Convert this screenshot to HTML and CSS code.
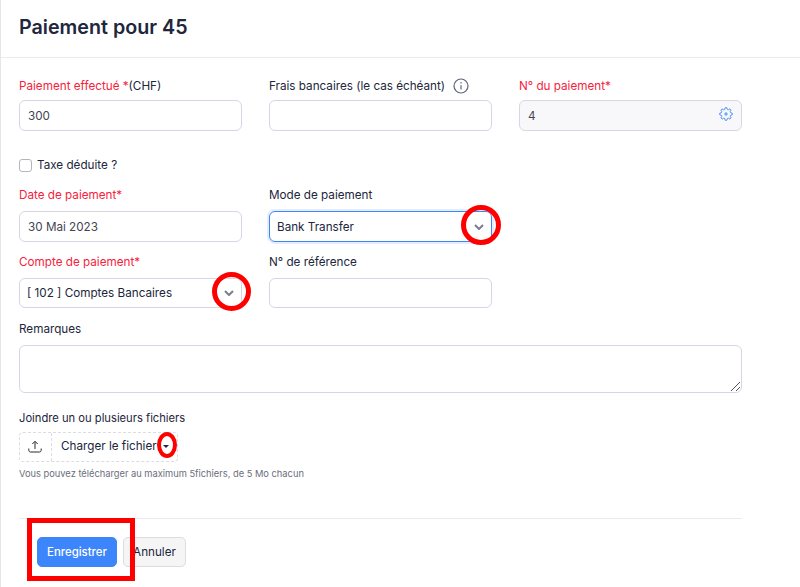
FILE: index.html
```html
<!DOCTYPE html>
<html lang="fr">
<head>
<meta charset="utf-8">
<title>Paiement pour 45</title>
<link rel="stylesheet" href="styles.css">
</head>
<body>
<div class="page">
  <header class="head"><h1>Paiement pour 45</h1></header>
  <form class="form">
    <div class="row row-first">
      <div class="field">
        <label class="label"><span class="req">Paiement effectué *</span>(CHF)</label>
        <div class="input">300</div>
      </div>
      <div class="field">
        <label class="label">Frais bancaires (le cas échéant)
          <svg class="info" width="16" height="16" viewBox="0 0 16 16" fill="none" stroke="#5f6478" stroke-width="1.2"><circle cx="8" cy="8" r="7"/><path d="M8 7.2v4.4"/><path d="M8 4.2v1.2" stroke-width="1.4"/></svg>
        </label>
        <div class="input"></div>
      </div>
      <div class="field">
        <label class="label req">N° du paiement*</label>
        <div class="input disabled">4
          <svg class="gear" width="14" height="14" viewBox="0 0 24 24" fill="none" stroke="#3f86f5" stroke-width="1.700" stroke-linejoin="round"><path d="M19.400 15a1.650 1.650 0 0 0 .33 1.820l.06.06a2 2 0 0 1 0 2.830 2 2 0 0 1-2.830 0l-.06-.06a1.650 1.650 0 0 0-1.820-.33 1.650 1.650 0 0 0-1 1.510V21a2 2 0 0 1-2 2 2 2 0 0 1-2-2v-.09A1.650 1.650 0 0 0 9 19.400a1.650 1.650 0 0 0-1.820.33l-.06.06a2 2 0 0 1-2.830 0 2 2 0 0 1 0-2.830l.06-.06a1.650 1.650 0 0 0 .33-1.820 1.650 1.650 0 0 0-1.510-1H3a2 2 0 0 1-2-2 2 2 0 0 1 2-2h.09A1.650 1.650 0 0 0 4.600 9a1.650 1.650 0 0 0-.33-1.820l-.06-.06a2 2 0 0 1 0-2.830 2 2 0 0 1 2.830 0l.06.06a1.650 1.650 0 0 0 1.820.33H9a1.650 1.650 0 0 0 1-1.510V3a2 2 0 0 1 2-2 2 2 0 0 1 2 2v.09a1.650 1.650 0 0 0 1 1.510 1.650 1.650 0 0 0 1.820-.33l.06-.06a2 2 0 0 1 2.830 0 2 2 0 0 1 0 2.830l-.06.06a1.650 1.650 0 0 0-.33 1.820V9a1.650 1.650 0 0 0 1.510 1H21a2 2 0 0 1 2 2 2 2 0 0 1-2 2h-.09a1.650 1.650 0 0 0-1.510 1z"/><circle cx="12" cy="12" r="2"/></svg>
        </div>
      </div>
    </div>
    <label class="check"><span class="box"></span>Taxe déduite ?</label>
    <div class="row row-date">
      <div class="field">
        <label class="label req">Date de paiement*</label>
        <div class="input">30 Mai 2023</div>
      </div>
      <div class="field">
        <label class="label">Mode de paiement</label>
        <div class="input select focus dark">Bank Transfer
          <svg class="chev" width="10" height="6" viewBox="0 0 10 6" fill="none" stroke="#7b7d92" stroke-width="2"><path d="M1 1l4 4 4-4"/></svg>
          <span class="ring"></span>
        </div>
      </div>
    </div>
    <div class="row row-account">
      <div class="field">
        <label class="label req">Compte de paiement*</label>
        <div class="input select short dark">[ 102 ] Comptes Bancaires
          <svg class="chev" width="10" height="6" viewBox="0 0 10 6" fill="none" stroke="#7b7d92" stroke-width="2"><path d="M1 1l4 4 4-4"/></svg>
          <span class="ring"></span>
        </div>
      </div>
      <div class="field">
        <label class="label">N° de référence</label>
        <div class="input short"></div>
      </div>
    </div>
    <div class="field wide">
      <label class="label">Remarques</label>
      <div class="area">
        <svg class="grip" width="9" height="9" viewBox="0 0 9 9" fill="none" stroke="#555" stroke-width="1"><path d="M0 9l9-9M5 9l4-4"/></svg>
      </div>
    </div>
    <div class="attach">
      <div class="attach-title">Joindre un ou plusieurs fichiers</div>
      <div class="upload">
        <span class="up-icon">
          <svg width="14" height="14" viewBox="0 0 14 14" fill="none" stroke="#2b2b33" stroke-width="1"><path d="M7 9V1.500M4.300 4L7 1.300 9.700 4M.8 8.500v1.800c0 1 .7 1.700 1.700 1.700h9c1 0 1.700-.7 1.700-1.700V8.500"/></svg>
        </span>
        <span class="up-text">Charger le fichier<span class="caret"></span><span class="oval"></span></span>
      </div>
      <p class="hint">Vous pouvez télécharger au maximum 5fichiers, de 5 Mo chacun</p>
    </div>
    <div class="actions">
      <button type="button" class="btn primary">Enregistrer</button>
      <button type="button" class="btn">Annuler</button>
      <span class="rect"></span>
    </div>
  </form>
</div>
</body>
</html>
```
FILE: styles.css
```css
* { box-sizing: border-box; }
html, body { margin: 0; height: 100%; }
body {
  background: #fff;
  color: #21263c;
  font-family: Inter, "Liberation Sans", sans-serif;
  font-size: 11.700px;
  overflow: hidden;
}
.page { height: 587px; border-left: 1px solid #e6e6e6; }
.head { height: 58px; border-bottom: 1px solid #ebebef; padding: 14px 18px 0; }
.head h1 { margin: 0; font-size: 19.700px; line-height: 26px; font-weight: 600; color: #21263c; }
.form { width: 741px; padding: 21px 0 0 18px; }
.row { display: grid; grid-template-columns: repeat(3, 223px); column-gap: 27px; }
.field { display: flex; flex-direction: column; position: relative; }
.label { height: 21px; line-height: 15px; display: flex; align-items: flex-start; white-space: pre; }
.req { color: #f5223d; }
.info { margin: -1px 0 0 8px; }
.input {
  height: 31px;
  border: 1px solid #d6d6e6;
  border-radius: 6px;
  padding: 0 8px;
  line-height: 30px;
  color: #444452;
  position: relative;
}
.short { height: 30px; line-height: 29px; }
.dark { color: #21263c; }
.select { padding: 0 7px; }
.disabled { background: #f8f8fb; }
.gear { position: absolute; right: 8px; top: 6px; }
.focus { border-color: #3f86f5; box-shadow: 0 0 0 2px #e4edfb; }
.chev { position: absolute; right: 7px; top: 12px; }
.ring {
  position: absolute;
  right: -10px; top: -7px;
  width: 40px; height: 40px;
  border: 5px solid #f00;
  border-radius: 50%;
}
.short .ring { right: -10px; top: -7px; width: 39px; height: 39px; }
.short .chev { top: 11px; }
.check { display: flex; align-items: center; gap: 5px; margin-top: 27px; height: 14px; line-height: 14px; color: #21263c; }
.box { width: 13px; height: 13px; border: 1px solid #b5b5c2; border-radius: 3px; }
.row-date { margin-top: 16px; }
.row-date .label { height: 23px; }
.row-account { margin-top: 13px; }
.row-account .label { height: 23px; }
.wide { margin-top: 14px; width: 723px; }
.wide .label { height: 23px; }
.area { height: 48px; border: 1px solid #d6d6e6; border-radius: 6px; position: relative; }
.grip { position: absolute; right: 1px; bottom: 1px; }
.attach { margin-top: 18px; }
.attach-title { line-height: 15px; font-size: 11.200px; }
.upload {
  display: flex;
  width: 159px; height: 30px;
  margin-top: 6px;
  border: 1px dashed #dcdce3;
  border-radius: 4px;
}
.up-icon { width: 32px; padding-right: 1px; display: flex; align-items: center; justify-content: center; border-right: 1px dashed #dcdce3; }
.up-text { position: relative; padding-left: 9px; line-height: 27px; display: flex; }
.caret {
  width: 0; height: 0;
  margin: 12px 0 0 6px;
  border: 3px solid transparent;
  border-top: 3px solid #21263c;
  border-bottom: 0;
}
.oval {
  position: absolute;
  left: 105px; top: -1px;
  width: 20px; height: 26px;
  border: 4px solid #f00;
  border-radius: 50%;
}
.hint { margin: 5px 0 0; font-size: 9.300px; line-height: 14px; color: #6b6d7c; }
.actions {
  position: relative;
  margin-top: 37px; width: 723px;
  border-top: 1px solid #ebebef;
  padding: 18px 0 0 18px;
  display: flex; gap: 6px;
}
.btn {
  font: 400 11.700px Inter, "Liberation Sans", sans-serif;
  height: 30px;
  border: 1px solid #dcdce3;
  border-radius: 5px;
  background: #f5f5f5;
  color: #21263c;
  padding: 0;
  width: 63px;
}
.primary { width: 80px; background: #3d85fb; border-color: #3d85fb; color: #fff; font-weight: 500; font-size: 11.400px; }
.rect {
  position: absolute;
  left: 8px; top: -1px;
  width: 108px; height: 63px;
  border: 5px solid #f00;
}
```
